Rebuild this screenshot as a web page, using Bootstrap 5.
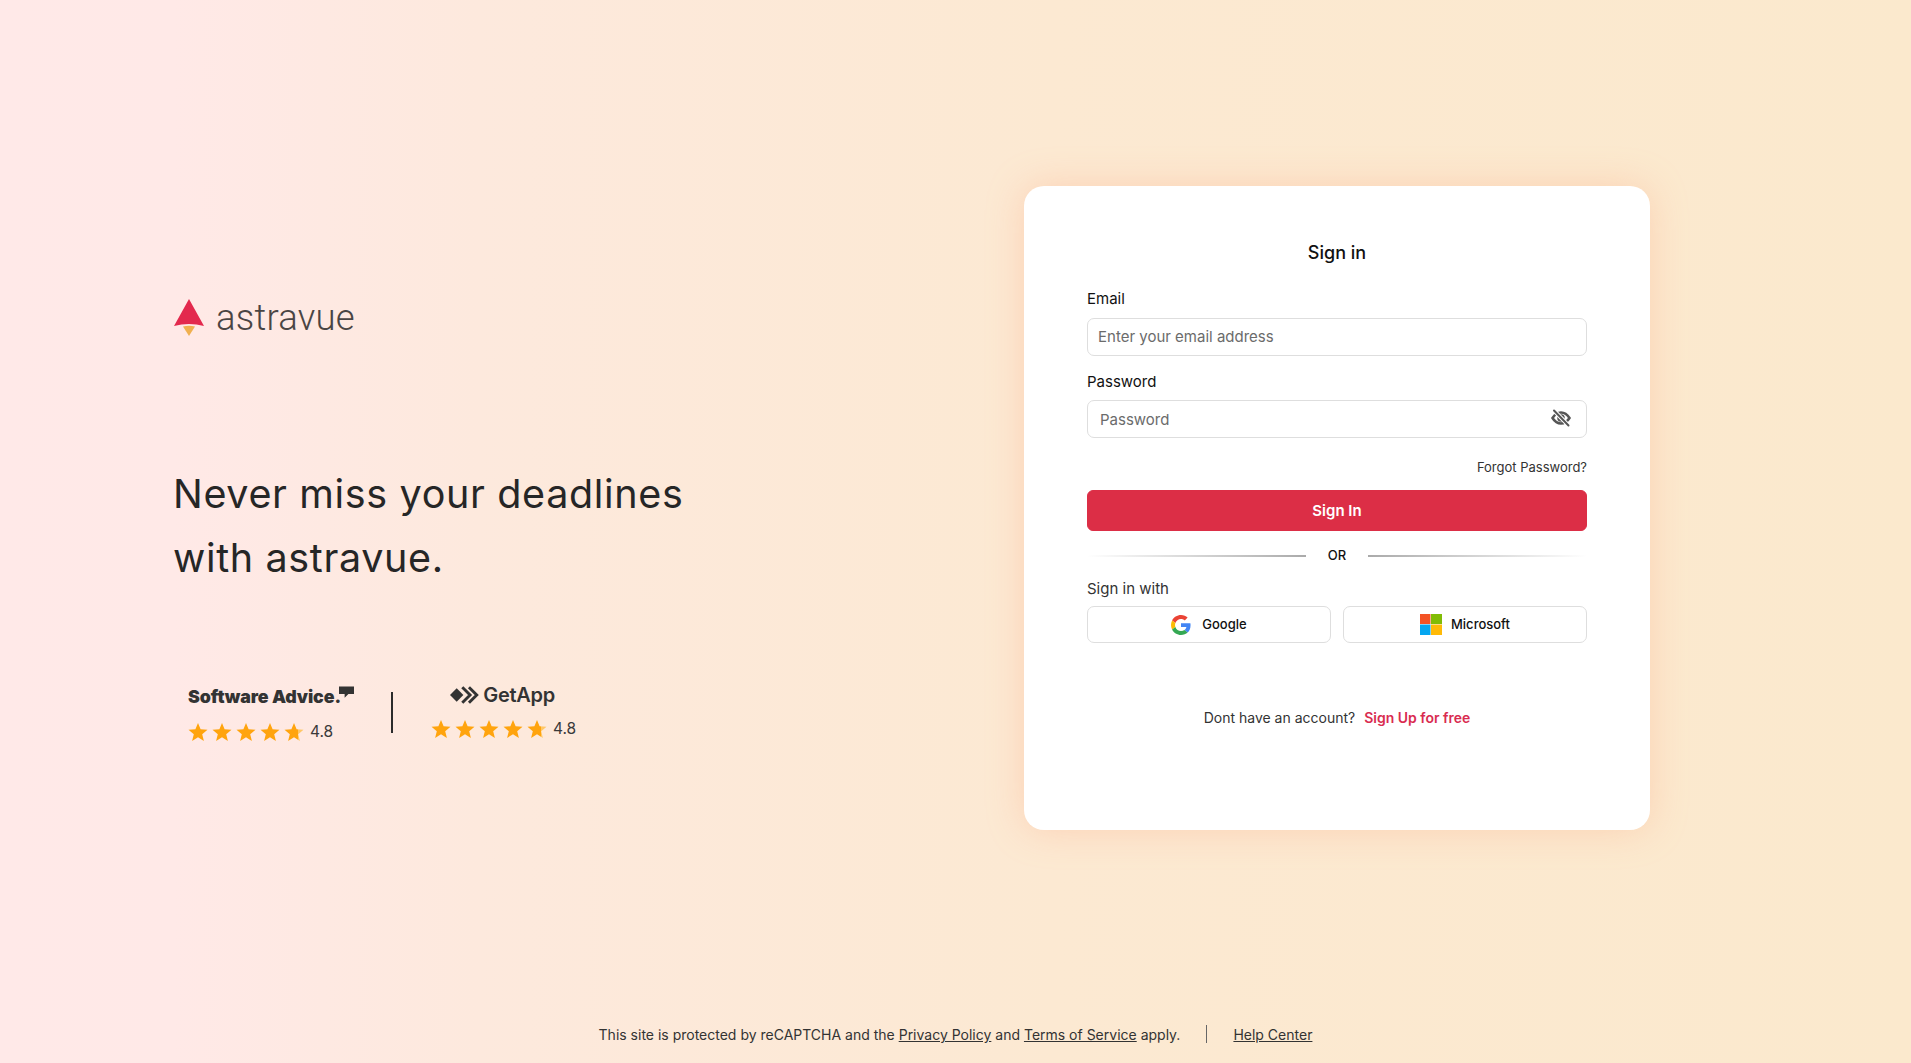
<!DOCTYPE html>
<html lang="en">
<head>
  <meta charset="UTF-8" />
  <meta name="viewport" content="width=device-width, initial-scale=1.0" />
  <title>astravue - Sign in</title>
  <link href="https://cdn.jsdelivr.net/npm/bootstrap@5.3.0/dist/css/bootstrap.min.css" rel="stylesheet" />
  <style>
    body { font-family: Inter, "Liberation Sans", sans-serif; color: #212529; background: linear-gradient(90deg, #ffe9e8 0%, #ffe9e7 9%, #fde9dd 25%, #fce9d2 55%, #fbe9cd 100%); height: 1063px; overflow: hidden; }
    .page-main { height: 1012px; }
    .left-side { width: 1024px; padding: 299px 0 0 173px; }
    .brand-name { font-family: Roboto, sans-serif; font-weight: 300; font-size: 36.5px; line-height: 36px; color: #4a4544; letter-spacing: .2px; margin-left: 3px; }
    .headline { font-size: 39.5px; font-weight: 400; line-height: 64px; letter-spacing: .65px; color: #262626; margin: 125px 0 0; }
    .ratings { margin: 94px 0 0 15px; }
    .sa-logo { font-family: Inter, sans-serif; font-weight: 900; font-size: 17.8px; line-height: 26px; color: #333; letter-spacing: -.1px; white-space: nowrap; }
    .sa-flag { margin-left: -2px; margin-top: 2px; }
    .ga-logo { font-weight: 600; font-size: 20px; line-height: 26px; color: #333; letter-spacing: -.3px; margin-top: -2px; margin-left: -2px; }
    .rate-num { font-size: 15.5px; color: #3a3a3a; margin-left: 6px; line-height: 20px; }
    .star-row { gap: 4px; }
    .sa-stars { margin-top: 12px; }
    .ga-stars { margin-top: 11px; }
    .rate-line { width: 2px; height: 41px; background: #2b2b2b; margin: 8px 38px 0 37px; }
    .login-card { width: 626px; height: 644px; margin-top: 186px; padding: 53px 63px 0; border: 0; border-radius: 20px; box-shadow: 0 0 36px rgba(255, 170, 135, .38); }
    .card-heading { font-size: 18px; font-weight: 500; line-height: 28px; color: #111; margin-bottom: 22px; }
    .field-label { font-size: 15px; font-weight: 400; line-height: 20px; margin-bottom: 9px; color: #111; }
    .pwd-label { margin-top: 16px; margin-bottom: 8px; }
    .field-input { height: 38px; font-size: 15px; padding: 0 10px; border: 1px solid #dedede; border-radius: 7px; }
    .field-input::placeholder { color: #6b6b6b; opacity: 1; }
    .email-input { padding-bottom: 2px; }
    .pwd-input { padding-left: 12px; }
    .eye-btn { right: 16px; top: 8px; width: 20px; height: 20px; line-height: 0; }
    .forgot { font-size: 13px; line-height: 18px; color: #333; margin-top: 20px; }
    .signin-btn { height: 41px; margin-top: 14px; padding-top: 7px; font-size: 15px; font-weight: 600; border-radius: 6px; background: #dc2e46; border-color: #dc2e46; }
    .or-row { margin-top: 15px; height: 20px; gap: 22px; font-size: 13px; font-weight: 500; color: #111; }
    .or-left { flex: 1; height: 2px; background: linear-gradient(90deg, rgba(170,170,170,0), #aaa); }
    .or-right { flex: 1; height: 2px; background: linear-gradient(90deg, #aaa, rgba(170,170,170,0)); }
    .with-label { font-size: 15px; line-height: 20px; margin-top: 13px; margin-bottom: 7px; color: #333; }
    .social-row { gap: 12px; }
    .social-btn { flex: 1; height: 37px; font-size: 13px; font-weight: 500; color: #111; background: #fff; border: 1px solid #dedede; border-radius: 7px; gap: 11px; }
    .ms-btn { gap: 9px; }
    .signup-row { margin-top: 65px; font-size: 14px; line-height: 20px; color: #333; }
    .signup-row a { color: #d92c50; font-weight: 600; text-decoration: none; margin-left: 5px; }
    .page-foot { font-size: 14px; line-height: 20px; color: #333; height: 51px; padding-top: 13px; }
    .page-foot a { color: #333; }
    .foot-line { width: 1px; height: 18px; background: #666; margin: 0 26px; }
  </style>
</head>
<body>
  <svg width="0" height="0" class="d-block">
    <defs>
      <linearGradient id="partStar" x1="0" x2="1" y1="0" y2="0">
        <stop offset=".72" stop-color="#ffa40e"/>
        <stop offset=".72" stop-color="#ffc766"/>
      </linearGradient>
    </defs>
    <symbol id="star" viewBox="0 0 20 20"><path fill="#ffa40e" d="M10 1l2.6 6.3 6.9.5-5.3 4.4 1.7 6.7L10 15.3 4.100 18.900l1.700-6.700L.5 7.800l6.900-.5z"/></symbol>
    <symbol id="star-part" viewBox="0 0 20 20"><path fill="url(#partStar)" d="M10 1l2.6 6.3 6.9.5-5.3 4.4 1.7 6.7L10 15.3 4.100 18.900l1.700-6.700L.5 7.800l6.900-.5z"/></symbol>
  </svg>

  <div class="page-main d-flex">
    <!-- left side -->
    <div class="left-side">
      <div class="d-flex align-items-center gap-2">
        <svg width="32" height="38" viewBox="0 0 32 38">
          <path fill="#e3294d" d="M16 0L31 27Q16 23 1 27z"/>
          <path fill="#f0b04f" d="M10 27.500Q16 26 22 27.500L16 37z"/>
        </svg>
        <span class="brand-name">astravue</span>
      </div>

      <h1 class="headline">Never miss your deadlines<br />with astravue.</h1>

      <div class="ratings d-flex">
        <div>
          <div class="sa-logo d-flex align-items-start">Software Advice.
            <svg width="15" height="13" viewBox="0 0 16 13" class="sa-flag"><path fill="#333" d="M0 0h16v8h-6l-4 4v-4H0z"/></svg>
          </div>
          <div class="sa-stars d-flex align-items-center">
            <div class="star-row d-flex">
              <svg width="20" height="20"><use href="#star"/></svg>
              <svg width="20" height="20"><use href="#star"/></svg>
              <svg width="20" height="20"><use href="#star"/></svg>
              <svg width="20" height="20"><use href="#star"/></svg>
              <svg width="20" height="20"><use href="#star-part"/></svg>
            </div>
            <span class="rate-num">4.8</span>
          </div>
        </div>
        <div class="rate-line"></div>
        <div>
          <div class="ga-logo d-flex align-items-center justify-content-center gap-1">
            <svg width="29" height="18" viewBox="0 0 26 16">
              <path fill="#333" d="M0 8l6-6 6 6-6 6z"/>
              <path fill="none" stroke="#333" stroke-width="2.600" d="M11 1l7 7-7 7M17 1l7 7-7 7"/>
            </svg>
            GetApp
          </div>
          <div class="ga-stars d-flex align-items-center">
            <div class="star-row d-flex">
              <svg width="20" height="20"><use href="#star"/></svg>
              <svg width="20" height="20"><use href="#star"/></svg>
              <svg width="20" height="20"><use href="#star"/></svg>
              <svg width="20" height="20"><use href="#star"/></svg>
              <svg width="20" height="20"><use href="#star-part"/></svg>
            </div>
            <span class="rate-num">4.8</span>
          </div>
        </div>
      </div>
    </div>

    <!-- sign in card -->
    <div class="login-card card bg-white">
      <div class="card-heading text-center">Sign in</div>

      <label class="field-label d-block" for="email">Email</label>
      <input type="email" id="email" class="field-input email-input form-control" placeholder="Enter your email address" />

      <label class="field-label pwd-label d-block" for="password">Password</label>
      <div class="position-relative">
        <input type="password" id="password" class="field-input pwd-input form-control" placeholder="Password" />
        <span class="eye-btn position-absolute">
          <svg width="20" height="20" viewBox="0 0 20 20" fill="none" stroke="#555" stroke-width="2.500" stroke-linecap="round">
            <path d="M1.500 10C4 6 7 4.500 10 4.500S16 6 18.500 10C16 14 13 15.500 10 15.500S4 14 1.500 10z"/>
            <circle cx="10" cy="10" r="2.500"/>
            <path stroke="#fff" stroke-width="4" d="M3 2.500l14.500 15"/>
            <path stroke-width="2" d="M3 2.500l14.500 15"/>
          </svg>
        </span>
      </div>

      <div class="forgot text-end">Forgot Password?</div>

      <button type="button" class="signin-btn btn btn-danger w-100">Sign In</button>

      <div class="or-row d-flex align-items-center">
        <span class="or-left"></span>
        <span>OR</span>
        <span class="or-right"></span>
      </div>

      <div class="with-label">Sign in with</div>
      <div class="social-row d-flex">
        <button type="button" class="social-btn d-flex align-items-center justify-content-center">
          <svg width="20" height="20" viewBox="0 0 48 48">
            <path fill="#EA4335" d="M24 9.500c3.500 0 6.700 1.300 9.100 3.500l6.800-6.800C35.800 2.400 30.300 0 24 0 14.600 0 6.500 5.400 2.600 13.200l7.900 6.200C12.400 13.600 17.700 9.500 24 9.500z"/>
            <path fill="#4285F4" d="M46.900 24.500c0-1.600-.1-3.100-.4-4.500H24v9h12.900c-.6 3-2.200 5.500-4.700 7.200l7.700 6c4.500-4.200 7-10.300 7-17.700z"/>
            <path fill="#FBBC05" d="M10.500 28.600c-.5-1.400-.8-3-.8-4.600s.3-3.200.8-4.600l-7.900-6.200C.9 16.500 0 20.100 0 24s.9 7.500 2.600 10.800l7.900-6.200z"/>
            <path fill="#34A853" d="M24 48c6.500 0 11.900-2.100 15.900-5.800l-7.700-6c-2.200 1.400-4.900 2.300-8.200 2.300-6.300 0-11.600-4.200-13.500-9.900l-7.900 6.200C6.500 42.600 14.600 48 24 48z"/>
          </svg>
          Google
        </button>
        <button type="button" class="social-btn ms-btn d-flex align-items-center justify-content-center">
          <svg width="22" height="21" viewBox="0 0 22 21">
            <rect width="10.500" height="10" fill="#f35325"/>
            <rect x="11" width="11" height="10" fill="#81bc06"/>
            <rect y="10.500" width="10.500" height="10.500" fill="#05a6f0"/>
            <rect x="11" y="10.500" width="11" height="10.500" fill="#ffba08"/>
          </svg>
          Microsoft
        </button>
      </div>

      <div class="signup-row text-center">Dont have an account? <a href="#">Sign Up for free</a></div>
    </div>
  </div>

  <div class="page-foot d-flex justify-content-center">
    <span>This site is protected by reCAPTCHA and the <a href="#">Privacy Policy</a> and <a href="#">Terms of Service</a> apply.</span>
    <span class="foot-line"></span>
    <a href="#">Help Center</a>
  </div>

  <script src="https://cdn.jsdelivr.net/npm/bootstrap@5.3.0/dist/js/bootstrap.bundle.min.js"></script>
</body>
</html>
